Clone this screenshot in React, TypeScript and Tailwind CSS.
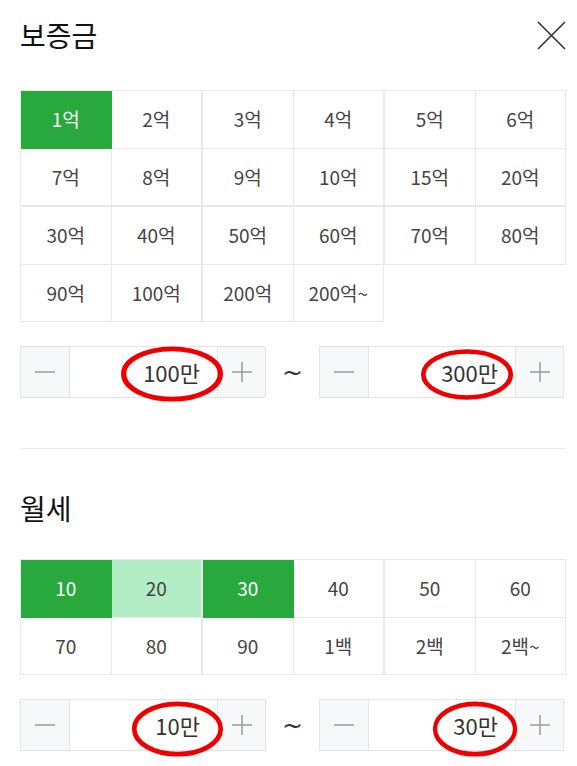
import type { ReactNode } from 'react';

type Cell = { label: string; state?: 'on' | 'range' };
type Block = Cell[];

const FONT = { fontFamily: '"Noto Sans CJK KR", "Noto Sans", sans-serif' };

const depositRows: Block[][] = [
  [
    [{ label: '1억', state: 'on' }, { label: '2억' }, { label: '7억' }, { label: '8억' }],
    [{ label: '3억' }, { label: '4억' }, { label: '9억' }, { label: '10억' }],
    [{ label: '5억' }, { label: '6억' }, { label: '15억' }, { label: '20억' }],
  ],
  [
    [{ label: '30억' }, { label: '40억' }, { label: '90억' }, { label: '100억' }],
    [{ label: '50억' }, { label: '60억' }, { label: '200억' }, { label: '200억~' }],
    [{ label: '70억' }, { label: '80억' }],
  ],
];

const rentRows: Block[][] = [
  [
    [{ label: '10', state: 'on' }, { label: '20', state: 'range' }, { label: '70' }, { label: '80' }],
    [{ label: '30', state: 'on' }, { label: '40' }, { label: '90' }, { label: '1백' }],
    [{ label: '50' }, { label: '60' }, { label: '2백' }, { label: '2백~' }],
  ],
];

function OptionGrid({ rows }: { rows: Block[][] }) {
  return (
    <div className="flex flex-col">
      {rows.map((blocks, r) => (
        <div key={r} className="grid grid-cols-3 items-start">
          {blocks.map((cells, b) => (
            <div key={b} className="grid grid-cols-2 border-l border-t border-[#e8e8e8]">
              {cells.map((c) => (
                <button
                  key={c.label}
                  className={
                    'flex h-[57.5px] items-center justify-center border-r border-b text-[19px] ' +
                    (c.state === 'on'
                      ? 'border-[#28a83d] bg-[#28a83d] text-white'
                      : c.state === 'range'
                        ? 'border-[#e8e8e8] bg-[#b3edc5] text-[#444]'
                        : 'border-[#e8e8e8] bg-white text-[#444]')
                  }
                >
                  {c.label}
                </button>
              ))}
            </div>
          ))}
        </div>
      ))}
    </div>
  );
}

function Minus() {
  return (
    <svg width="20" height="20" viewBox="0 0 20 20">
      <line x1="0" y1="10" x2="20" y2="10" stroke="#9b9b9b" strokeWidth="1.5" />
    </svg>
  );
}

function Plus() {
  return (
    <svg width="20" height="20" viewBox="0 0 20 20">
      <line x1="0" y1="10" x2="20" y2="10" stroke="#9b9b9b" strokeWidth="1.5" />
      <line x1="10" y1="0" x2="10" y2="20" stroke="#9b9b9b" strokeWidth="1.5" />
    </svg>
  );
}

// red hand-drawn mark around the value
function Mark({ className }: { className: string }) {
  return (
    <svg className={'pointer-events-none absolute ' + className} viewBox="0 0 100 60" preserveAspectRatio="none">
      <ellipse cx="50" cy="30" rx="46.5" ry="26" fill="none" stroke="#ee0000" strokeWidth="5" />
    </svg>
  );
}

function Stepper({ value, width, mark }: { value: string; width: string; mark: ReactNode }) {
  return (
    <div className={'relative flex h-[52px] border border-[#e4e4e4] ' + width}>
      <button className="flex w-[49px] shrink-0 items-center justify-center border-r border-[#e4e4e4] bg-[#f7f8fa]">
        <Minus />
      </button>
      <div className="flex flex-1 items-center justify-end bg-white pr-[17px] text-[22px] text-[#333]">{value}</div>
      <button className="flex w-[48px] shrink-0 items-center justify-center border-l border-[#e4e4e4] bg-[#f7f8fa]">
        <Plus />
      </button>
      {mark}
    </div>
  );
}

function RangeRow({ from, to, marks }: { from: string; to: string; marks: [string, string] }) {
  return (
    <div className="flex items-center">
      <Stepper value={from} width="w-[246px]" mark={<Mark className={marks[0]} />} />
      <div className="flex w-[53px] justify-center text-[25px] leading-none text-[#333]" style={{ fontFamily: '"DejaVu Sans", sans-serif' }}>
        ~
      </div>
      <Stepper value={to} width="w-[245px]" mark={<Mark className={marks[1]} />} />
    </div>
  );
}

export default function App() {
  return (
    <div className="min-h-[766px] w-[577px] bg-white pl-5 pt-[15px]" style={FONT}>
      <div className="w-[546px]">
        <div className="flex h-10 items-center justify-between">
          <h2 className="text-[28px] leading-10 text-[#111]">보증금</h2>
          <button className="flex h-[30px] w-[30px] items-center justify-center">
            <svg width="29" height="29" viewBox="0 0 29 29">
              <path d="M1 1L28 28M28 1L1 28" stroke="#333" strokeWidth="1.6" fill="none" />
            </svg>
          </button>
        </div>

        <div className="mt-[35px]">
          <OptionGrid rows={depositRows} />
        </div>

        <div className="mt-6">
          <RangeRow
            from="100만"
            to="300만"
            marks={['left-[99px] -top-[2px] h-[58px] w-[104px]', 'left-[100px] top-[1px] h-[53px] w-[94px]']}
          />
        </div>

        <div className="mt-[50px] h-px bg-[#eaeaea]" />

        <div className="mt-[39px] flex h-10 items-center">
          <h2 className="text-[28px] leading-10 text-[#111]">월세</h2>
        </div>

        <div className="mt-[31px]">
          <OptionGrid rows={rentRows} />
        </div>

        <div className="mt-6">
          <RangeRow
            from="10만"
            to="30만"
            marks={['left-[110px] top-0 h-[58px] w-[93px]', 'left-[112px] top-0 h-[58px] w-[86px]']}
          />
        </div>
      </div>
    </div>
  );
}
